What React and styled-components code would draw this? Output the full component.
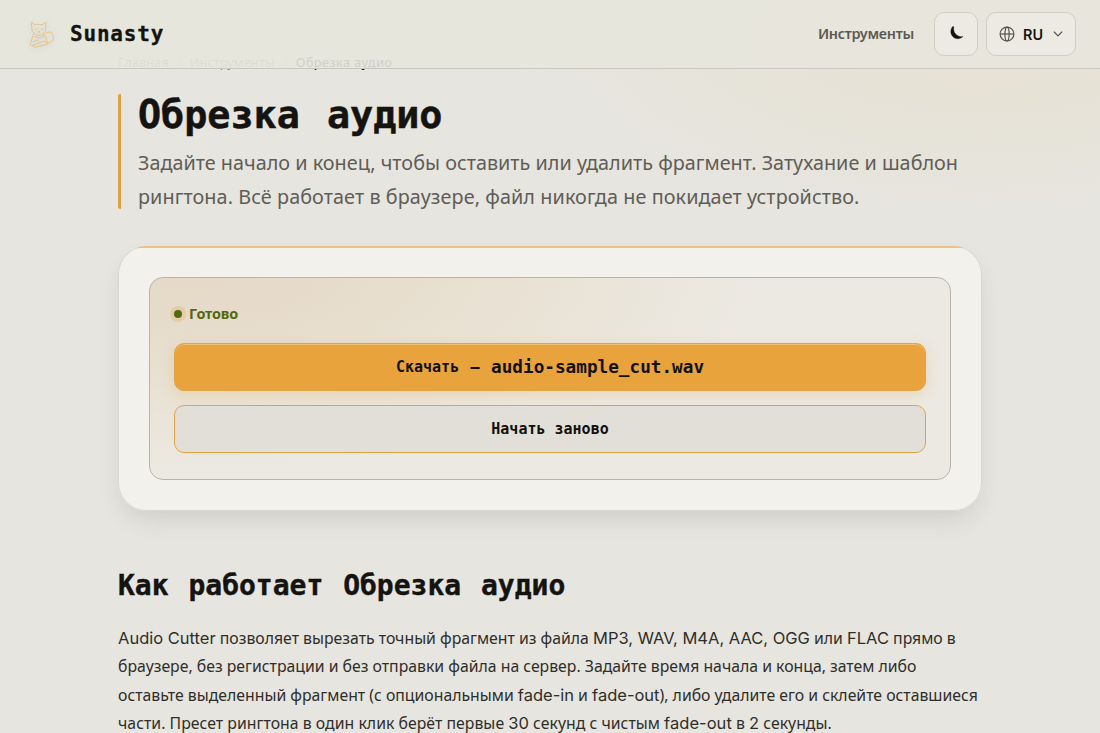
import styled, { createGlobalStyle } from 'styled-components';

const GlobalStyle = createGlobalStyle`
    *{
        box-sizing:border-box;
    }
    body{
        margin:0;
        background:#e6e5e0;
        overflow:hidden;
    }
`;

const Container = styled.div`
    height:733px;
    overflow:hidden;
    color:#14130f;
    font-family:'Noto Sans', sans-serif;
    background:
        radial-gradient(ellipse 480px 190px at 980px 40px, rgba(232,205,140,.17), transparent),
        #e6e5e0;
`;

const Header = styled.header`
    position:relative;
    z-index:2;
    display:flex;
    align-items:center;
    height:69px;
    padding:0 24px 0 23px;
    border-bottom:1px solid #c9c7c0;
    background:rgba(231,229,221,.9);
`;

const LogoIcon = styled.svg`
    width:36px;
    height:36px;
    filter:drop-shadow(0 1px 3px rgba(0,0,0,.12));
`;

const LogoText = styled.div`
    margin-left:11px;
    font-family:'DejaVu Sans Mono', monospace;
    font-size:21px;
    font-weight:700;
    letter-spacing:.8px;
    line-height:30px;
    -webkit-text-stroke:.3px #14130f;
`;

const NavLink = styled.a`
    margin-left:auto;
    margin-right:20px;
    padding-bottom:2px;
    color:#5b5951;
    font-size:14.4px;
    font-weight:600;
    letter-spacing:-.28px;
`;

const HeaderBtn = styled.button`
    display:flex;
    align-items:center;
    justify-content:center;
    width:${(props) => props.$width};
    height:44px;
    margin-right:${(props) => props.$gap ? props.$gap : '0'};
    padding:0;
    border:1px solid #d0cec5;
    border-radius:10px;
    background:#edeae3;
    color:#14130f;
    font-family:Inter, sans-serif;
    font-size:14.4px;
    font-weight:600;
`;

const LangText = styled.span`
    margin:0 10px 0 8px;
`;

const Main = styled.main`
    width:864px;
    margin:-17px auto 0;
`;

const Breadcrumb = styled.nav`
    display:flex;
    height:22px;
    color:#77756c;
    font-size:12.85px;
    line-height:20px;
`;

const BreadcrumbItem = styled.span`
    margin-right:${(props) => props.$current ? '0' : '8px'};
    color:${(props) => props.$current ? '#14130f' : '#8f8d84'};
    font-weight:${(props) => props.$current ? '500' : '400'};
    letter-spacing:${(props) => props.$current ? '.22px' : '.02px'};
`;

const BreadcrumbSep = styled.span`
    margin-right:8.4px;
    color:#c5c3bb;
`;

const TitleBox = styled.div`
    height:115px;
    margin-top:20px;
    padding-left:17px;
    border-left:3px solid #e0a248;
    border-radius:2px;
`;

const Title = styled.h1`
    margin:0;
    font-family:'DejaVu Sans Mono', monospace;
    font-size:38.4px;
    font-weight:700;
    line-height:42px;
    word-spacing:4px;
    white-space:nowrap;
    -webkit-text-stroke:.5px #14130f;
`;

const Lead = styled.p`
    margin:10px 0 0;
    color:#5f5d56;
    font-size:19.8px;
    line-height:34px;
    white-space:nowrap;
`;

const Line = styled.span`
    display:block;
    letter-spacing:${(props) => props.$spacing ? props.$spacing : '0'};
`;

const CardShadow = styled.div`
    margin-top:37px;
    border-radius:28px;
    box-shadow:0 12px 24px -6px rgba(60,58,45,.15);
`;

const Card = styled.section`
    position:relative;
    overflow:hidden;
    padding:31px;
    border-radius:28px;
    background:#f2f1ec;
    box-shadow:inset 0 0 0 1px #d9d7d0;
`;

const CardAccent = styled.div`
    position:absolute;
    top:0;
    left:0;
    right:0;
    height:2px;
    background:#ecc384;
`;

const ResultBox = styled.div`
    height:203px;
    padding:24px 24px 0;
    border:1px solid #b7b4ac;
    border-radius:14px;
    background:radial-gradient(ellipse 560px 190px at 40px 0, #e5d8c6 0%, #e8e0d1 50%, #ece9e2 100%);
`;

const StatusRow = styled.div`
    display:flex;
    align-items:center;
    height:23px;
    color:#54680f;
    font-size:14.4px;
    font-weight:700;
    letter-spacing:-.15px;
`;

const StatusDot = styled.span`
    width:8px;
    height:8px;
    margin-right:7px;
    border-radius:50%;
    background:#56690f;
    box-shadow:0 0 0 4px rgba(224,162,72,.25);
`;

const ActionBtn = styled.button`
    display:flex;
    align-items:center;
    justify-content:center;
    width:100%;
    height:48px;
    margin-top:${(props) => props.$primary ? '18px' : '14px'};
    padding:0;
    border:1px solid #e0a448;
    border-radius:10px;
    background:${(props) => props.$primary ? '#e8a33d' : '#e2dfd8'};
    box-shadow:${(props) => props.$primary ? '0 4px 14px rgba(232,163,61,.25), inset 0 1px 0 rgba(255,255,255,.3)' : 'none'};
    color:#14100a;
    font-family:'DejaVu Sans Mono', monospace;
    font-size:15px;
    font-weight:700;
    word-spacing:${(props) => props.$primary ? '2.4px' : '0'};
    white-space:pre;
`;

const FileName = styled.span`
    font-size:17.7px;
`;

const SectionTitle = styled.h2`
    margin:55px 0 0;
    font-family:'DejaVu Sans Mono', monospace;
    font-size:28px;
    font-weight:700;
    line-height:40px;
    word-spacing:3px;
    white-space:nowrap;
    -webkit-text-stroke:.4px #14130f;
`;

const BodyText = styled.p`
    margin:18px 0 0;
    color:#2f2e29;
    font-size:15.8px;
    line-height:28.4px;
    white-space:nowrap;
`;

const Latin = styled.span`
    font-family:Inter, sans-serif;
    font-size:16.5px;
    line-height:1;
`;

const CatLogo = () => {
    return (
        <LogoIcon viewBox='0 0 36 36' fill='none' stroke='#e5bf82' strokeWidth='.9' strokeLinecap='round' strokeLinejoin='round'>
            <path d='M9 14 L8.3 6.2 L12 8.8 Q15.5 7.8 19 8.8 L23 6.2 L22.6 14 Q21.6 18.5 15.8 19.5 Q10 18.5 9 14Z' />
            <path d='M12 13.2 Q13 12.2 14 13.2 M18 13.2 Q19 12.2 20 13.2 M15 15.3 L16 16 L17 15.3 M16 16 V17' />
            <path d='M10.5 18.2 L8.6 23.8 L7.2 28.8 Q8.2 30.2 10.2 29.3 L20.2 25.6 Q24.2 24.8 24.7 28 L13.5 31 Q10.2 32 9.8 29.5' />
            <path d='M20.5 18 Q23.8 20.2 24 25 M11.8 20.6 Q16 23.2 21 20.5 M10 26 L15.6 23.8' />
            <path d='M23 17 Q28 14.3 29.6 18.2 Q31.8 23.3 28.3 26 Q26.5 27.4 24.3 26.6' />
        </LogoIcon>
    );
}

const App = () => {
    return (
        <>
            <GlobalStyle />
            <Container>
                <Header>
                    <CatLogo />
                    <LogoText>Sunasty</LogoText>
                    <NavLink>Инструменты</NavLink>
                    <HeaderBtn type='button' $width='44px' $gap='8px'>
                        <svg width='16' height='16' viewBox='0 0 16 16'>
                            <path d='M4.3 1 C2.2 4 2.4 7.9 4.8 10.5 C7.5 13.4 12 13.4 14.9 10.6 C12 11 9.3 10.1 7.6 8.1 C5.8 6 5.3 3.5 5.8 .8 C5.3 .4 4.7 .5 4.3 1Z' fill='#14130f' stroke='#14130f' strokeWidth='.4' />
                        </svg>
                    </HeaderBtn>
                    <HeaderBtn type='button' $width='90px'>
                        <svg width='16' height='16' viewBox='0 0 16 16' fill='none' stroke='#55534c' strokeWidth='1.2'>
                            <circle cx='8' cy='8' r='6.9' />
                            <ellipse cx='8' cy='8' rx='2.1' ry='6.9' />
                            <path d='M1 8 H15' />
                        </svg>
                        <LangText>RU</LangText>
                        <svg width='10' height='10' viewBox='0 0 10 10' fill='none' stroke='#55534c' strokeWidth='1.1' strokeLinecap='round' strokeLinejoin='round'>
                            <path d='M1.2 3 L5 6.9 L8.8 3' />
                        </svg>
                    </HeaderBtn>
                </Header>
                <Main>
                    <Breadcrumb>
                        <BreadcrumbItem>Главная</BreadcrumbItem>
                        <BreadcrumbSep>/</BreadcrumbSep>
                        <BreadcrumbItem>Инструменты</BreadcrumbItem>
                        <BreadcrumbSep>/</BreadcrumbSep>
                        <BreadcrumbItem $current>Обрезка аудио</BreadcrumbItem>
                    </Breadcrumb>
                    <TitleBox>
                        <Title>Обрезка аудио</Title>
                        <Lead>
                            <Line $spacing='.015px'>Задайте начало и конец, чтобы оставить или удалить фрагмент. Затухание и шаблон</Line>
                            <Line $spacing='.08px'>рингтона. Всё работает в браузере, файл никогда не покидает устройство.</Line>
                        </Lead>
                    </TitleBox>
                    <CardShadow>
                        <Card>
                            <CardAccent />
                            <ResultBox>
                                <StatusRow>
                                    <StatusDot />
                                    Готово
                                </StatusRow>
                                <ActionBtn type='button' $primary>Скачать — <FileName>audio-sample_cut.wav</FileName></ActionBtn>
                                <ActionBtn type='button'>Начать заново</ActionBtn>
                            </ResultBox>
                        </Card>
                    </CardShadow>
                    <SectionTitle>Как работает Обрезка аудио</SectionTitle>
                    <BodyText>
                        <Line><Latin>Audio Cutter</Latin> позволяет вырезать точный фрагмент из файла <Latin>MP3, WAV, M4A, AAC, OGG</Latin> или <Latin>FLAC</Latin> прямо в</Line>
                        <Line>браузере, без регистрации и без отправки файла на сервер. Задайте время начала и конца, затем либо</Line>
                        <Line>оставьте выделенный фрагмент (с опциональными <Latin>fade-in</Latin> и <Latin>fade-out</Latin>), либо удалите его и склейте оставшиеся</Line>
                        <Line $spacing='.03px'>части. Пресет рингтона в один клик берёт первые <Latin>30</Latin> секунд с чистым <Latin>fade-out</Latin> в <Latin>2</Latin> секунды.</Line>
                    </BodyText>
                </Main>
            </Container>
        </>
    );
}

export default App;
